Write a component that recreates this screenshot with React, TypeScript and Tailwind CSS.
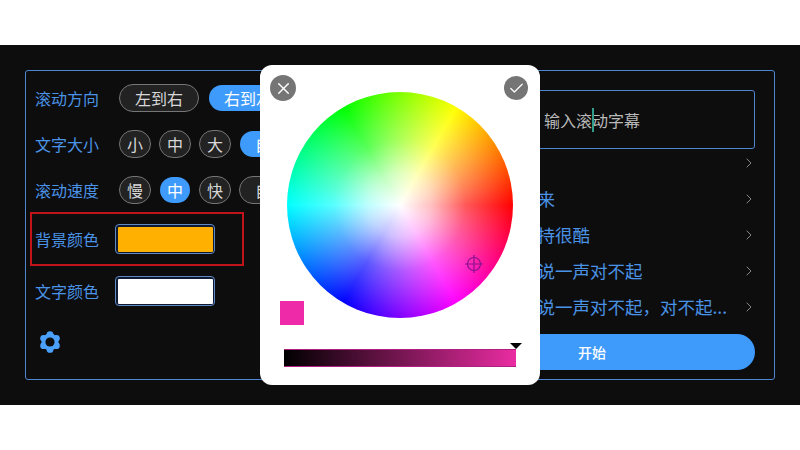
import { Check, ChevronRight, X } from "lucide-react";

const rows = [
    "今天也要",
    "下班早点回来",
    "低调做人保持很酷",
    "我只想对你说一声对不起",
    "我只想对你说一声对不起\uFF0C对不起...",
];

function Pill({ label, active, wide }: { label: string; active?: boolean; wide?: boolean }) {
    return (
        <div
            className={`flex h-7 shrink-0 items-center justify-center rounded-full border text-base leading-none ${wide ? "w-20" : "w-8"} ${
                active ? "border-transparent bg-[#3f9bfb] bg-clip-padding text-white" : "border-[#767676] bg-[#222222] text-[#d8d8d8]"
            }`}
        >
            {label}
        </div>
    );
}

function Label({ text }: { text: string }) {
    return <span className="w-20 shrink-0 text-base leading-none text-[#4b93e6]">{text}</span>;
}

function Swatch({ color }: { color: string }) {
    return (
        <div className="h-[30px] w-[100px] rounded-[4px] border-[1.5px] border-[#6088c4] bg-[#0d1a30] p-[1.5px]">
            <div className={`h-full w-full rounded-[1px] ${color}`} />
        </div>
    );
}

function Gear() {
    return (
        <svg width="24" height="24" viewBox="0 0 24 24">
            <g fill="#4aa0fb">
                <circle cx="12" cy="12" r="8.5" />
                <circle cx="12" cy="4.6" r="3.4" />
                <circle cx="18.4" cy="8.3" r="3.4" />
                <circle cx="18.4" cy="15.7" r="3.4" />
                <circle cx="12" cy="19.4" r="3.4" />
                <circle cx="5.6" cy="15.7" r="3.4" />
                <circle cx="5.6" cy="8.3" r="3.4" />
            </g>
            <circle cx="12" cy="12" r="4.6" fill="#0d0d0e" />
        </svg>
    );
}

function ColorPicker() {
    return (
        <div className="absolute left-[234px] top-[-6px] flex h-[320px] w-[280px] flex-col rounded-xl bg-white">
            <button className="absolute left-[10px] top-[10px] flex h-[26px] w-[26px] items-center justify-center rounded-full bg-[#757575] text-white">
                <X size={19} strokeWidth={1.75} />
            </button>
            <button className="absolute right-[12px] top-[11px] flex h-6 w-6 items-center justify-center rounded-full bg-[#757575] text-white">
                <Check size={17} strokeWidth={1.75} />
            </button>

            {/* Wheel */}
            <div className="relative ml-[27px] mt-[27px] h-[226px] w-[226px] rounded-full bg-[conic-gradient(from_90deg,#ff0000,#ff00ff,#0000ff,#00ffff,#00ff00,#ffff00,#ff0000)]">
                <div className="absolute inset-0 rounded-full bg-[radial-gradient(closest-side,#ffffff,rgba(255,255,255,0.75)_28%,rgba(255,255,255,0.35)_58%,rgba(255,255,255,0))]" />
                <svg className="absolute left-[177px] top-[162px]" width="20" height="20" viewBox="0 0 20 20" fill="none" stroke="#86128f" strokeWidth="1.2">
                    <circle cx="10" cy="10" r="6.5" />
                    <path d="M10 1V19M1 10H19" />
                </svg>
            </div>

            <div className="absolute left-[20px] top-[236px] h-6 w-6 bg-[#ee2aa8]" />

            {/* Brightness */}
            <div className="relative ml-[24px] mt-[31px] h-[18px] w-[232px] border-y border-[#b01f80] bg-[linear-gradient(to_right,#000000,#ea2ca2)]">
                <div className="absolute right-[-6px] top-[-7px] h-0 w-0 border-x-[6px] border-t-[6px] border-x-transparent border-t-black" />
            </div>
        </div>
    );
}

export default function App() {
    return (
        <div className="h-[450px] w-[800px] bg-white pt-[45px] font-['Noto_Sans_CJK_SC',sans-serif]">
            <div className="h-[360px] bg-[#0d0d0e] px-[25px] pt-[25px]">
                <div className="relative flex h-[310px] justify-between rounded-[3px] border-[1.5px] border-[#4f86d2] pl-[9px] pr-[19px]">
                    {/* Settings */}
                    <div className="flex flex-col pt-[13px]">
                        <div className="flex h-7 items-center">
                            <Label text="滚动方向" />
                            <div className="ml-1 flex gap-[9px]">
                                <Pill label="左到右" wide />
                                <Pill label="右到左" wide active />
                            </div>
                        </div>
                        <div className="mt-[18px] flex h-7 items-center">
                            <Label text="文字大小" />
                            <div className="ml-1 flex gap-2">
                                <Pill label="小" />
                                <Pill label="中" />
                                <Pill label="大" />
                                <Pill label="自定义" wide active />
                            </div>
                        </div>
                        <div className="mt-[18px] flex h-7 items-center">
                            <Label text="滚动速度" />
                            <div className="ml-1 flex gap-2">
                                <Pill label="慢" />
                                <Pill label="中" active />
                                <Pill label="快" />
                                <Pill label="自定义" wide />
                            </div>
                        </div>
                        <div className="ml-[-5px] mt-2 flex h-[54px] w-[214px] items-center border-2 border-[#c0141a] pl-[3px]">
                            <Label text="背景颜色" />
                            <Swatch color="bg-[#ffb000]" />
                        </div>
                        <div className="mt-[10px] flex h-[30px] items-center">
                            <Label text="文字颜色" />
                            <Swatch color="bg-white" />
                        </div>
                        <div className="ml-[3px] mt-[24px]">
                            <Gear />
                        </div>
                    </div>

                    {/* Input and presets */}
                    <div className="flex w-[326px] flex-col pt-[19px]">
                        <div className="relative flex h-[59px] items-center justify-center rounded-[3px] border-[1.5px] border-[#4f86d2] text-base text-[#b9b9b9]">
                            输入滚动字幕
                            <div className="absolute left-1/2 top-[17px] h-6 w-[1.5px] bg-[#2f9c8c]" />
                        </div>
                        <div className="mt-[-2px] flex flex-col gap-1">
                            {rows.map((row) => (
                                <div key={row} className="flex h-8 items-center pl-[21px] text-[#4b93e6]">
                                    <span className="whitespace-nowrap text-[17.5px] leading-8">{row}</span>
                                    <ChevronRight className="ml-auto mr-[-2px] text-[#a0a0a0]" size={16} strokeWidth={1.25} />
                                </div>
                            ))}
                        </div>
                        <div className="mt-[11px] flex h-9 items-center justify-center rounded-full bg-[#3f9bfb] text-sm font-medium text-white">
                            开始
                        </div>
                    </div>

                    <ColorPicker />
                </div>
            </div>
        </div>
    );
}
